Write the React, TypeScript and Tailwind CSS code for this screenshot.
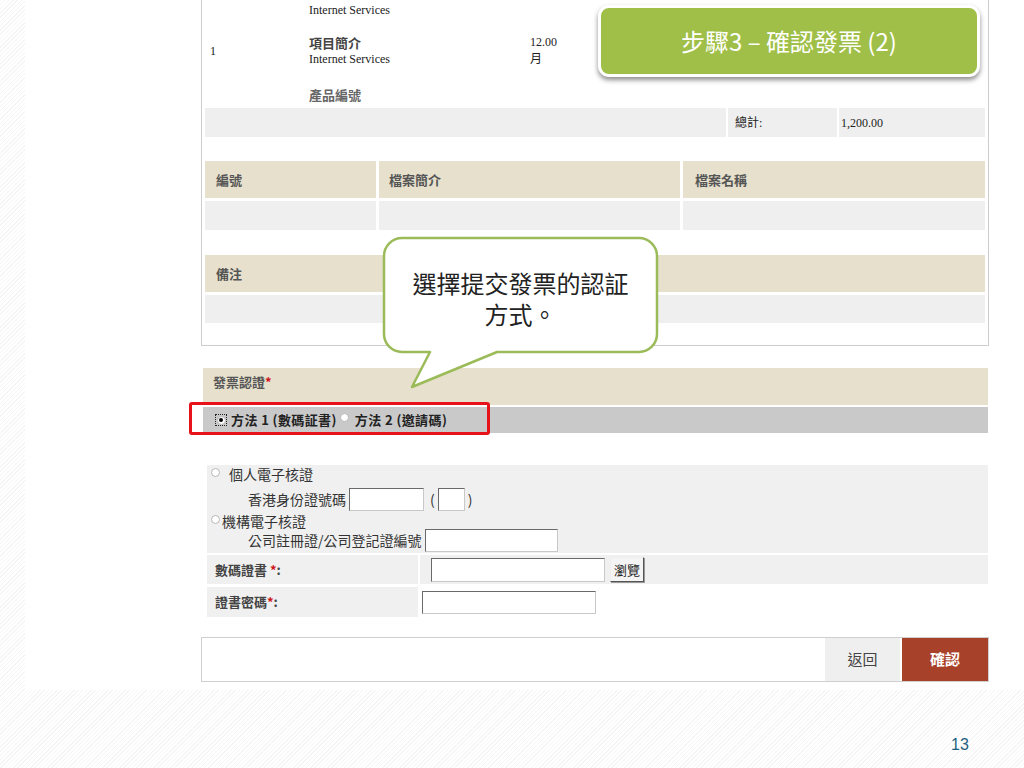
import { clsx } from 'clsx'

const cjk = "font-['Noto_Sans_CJK_TC',sans-serif]"
const serif = "font-['Liberation_Serif','Noto_Sans_CJK_TC',serif]"

function Radio({ checked, focus, className }: { checked?: boolean; focus?: boolean; className?: string }) {
  return (
    <span
      className={clsx(
        'inline-flex flex-shrink-0 items-center justify-center',
        focus ? 'h-[12px] w-[12px] border border-dotted border-[#222]' : 'h-[10px] w-[10px]',
        className
      )}
    >
      <span className="flex h-[9px] w-[9px] items-center justify-center rounded-full border border-[#b8b8b8] bg-white">
        {checked && <span className="h-[4px] w-[4px] rounded-full bg-black" />}
      </span>
    </span>
  )
}

function Field({ className }: { className?: string }) {
  return (
    <span
      className={clsx(
        'inline-block flex-shrink-0 border border-[#c8c8c8] border-t-[#6a6a6a] border-l-[#6a6a6a] bg-white',
        className
      )}
    />
  )
}

function Req() {
  return <span className="text-[#d0141c]">*</span>
}

export default function App() {
  return (
    <div
      className={clsx(
        'relative h-[768px] w-[1024px] overflow-hidden text-[#333]',
        'bg-[repeating-linear-gradient(135deg,#f5f5f5_0px,#f5f5f5_1px,#ffffff_1px,#ffffff_3px)]',
        cjk
      )}
    >
      <div className="ml-[25px] h-[690px] bg-white">
        {/* invoice panel */}
        <div className="ml-[176px] w-[788px] border-x border-b border-[#cdcdcd] px-[3px] pb-[22px]">
          <div className={clsx('flex h-[20px] items-center pl-[104px] text-[12px] text-[#222]', serif)}>
            Internet Services
          </div>
          <div className="flex h-[62px] items-center text-[#222]">
            <div className={clsx('w-[104px] pl-[5px] text-[12px]', serif)}>1</div>
            <div className="w-[221px] leading-[17px]">
              <div className="text-[13px] font-bold text-[#444]">項目簡介</div>
              <div className={clsx('text-[12px]', serif)}>Internet Services</div>
            </div>
            <div className={clsx('text-[12px] leading-[17px]', serif)}>
              <div>12.00</div>
              <div>月</div>
            </div>
          </div>
          <div className="flex h-[26px] items-center pl-[104px] text-[13px] font-bold text-[#666]">產品編號</div>

          <div className={clsx('flex h-[29px] text-[12px] text-[#222]', serif)}>
            <div className="w-[521px] bg-[#efefef]" />
            <div className="ml-[2px] flex w-[109px] items-center bg-[#efefef] pl-[7px]">總計:</div>
            <div className="ml-[2px] flex flex-1 items-center bg-[#efefef] pl-[2px]">1,200.00</div>
          </div>

          <div className="mt-[24px] flex h-[37px] text-[13px] font-bold text-[#555]">
            <div className="flex w-[171px] items-center bg-[#e6e0cc] pl-[11px]">編號</div>
            <div className="ml-[3px] flex w-[301px] items-center bg-[#e6e0cc] pl-[10px]">檔案簡介</div>
            <div className="ml-[3px] flex flex-1 items-center bg-[#e6e0cc] pl-[12px]">檔案名稱</div>
          </div>
          <div className="mt-[3px] flex h-[29px]">
            <div className="w-[171px] bg-[#efeff0]" />
            <div className="ml-[3px] w-[301px] bg-[#efeff0]" />
            <div className="ml-[3px] flex-1 bg-[#efeff0]" />
          </div>

          <div className="mt-[25px] flex h-[37px] items-center bg-[#e6e0cc] pl-[11px] text-[13px] font-bold text-[#555]">
            備注
          </div>
          <div className="mt-[3px] h-[28px] bg-[#efeff0]" />
        </div>

        {/* authentication */}
        <div className="ml-[178px] mt-[22px] w-[785px]">
          <div className="h-[37px] bg-[#e6e0cc] pl-[10px] pt-[6px] text-[13px] font-bold leading-[16px] text-[#555]">
            發票認證<Req />
          </div>
          <div className="mt-[2px] flex h-[26px] items-center bg-[#c9c9c9] pl-[12px] text-[13px] font-bold tracking-[0.4px] text-[#222]">
            <Radio checked focus />
            <span className="ml-[4px]">方法 1 (數碼証書)</span>
            <Radio className="mb-[6px] ml-[3px]" />
            <span className="ml-[5px]">方法 2 (邀請碼)</span>
          </div>
        </div>

        <div className="ml-[182px] mt-[32px] w-[781px]">
          <div className="h-[88px] bg-[#f0f0f0] text-[14px] text-[#333]">
            <div className="flex h-[19px] items-center pl-[3px]">
              <Radio className="mb-[4px]" />
              <span className="ml-[9px]">個人電子核證</span>
            </div>
            <div className="flex h-[30px] items-center pl-[41px]">
              <span>香港身份證號碼</span>
              <Field className="ml-[3px] h-[23px] w-[75px]" />
              <span className="ml-[6px]">(</span>
              <Field className="ml-[3px] h-[23px] w-[27px]" />
              <span className="ml-[3px]">)</span>
            </div>
            <div className="flex h-[14px] items-center pl-[3px]">
              <Radio className="mb-[4px]" />
              <span className="ml-[2px]">機構電子核證</span>
            </div>
            <div className="flex h-[25px] items-center pl-[41px]">
              <span>公司註冊證/公司登記證編號</span>
              <Field className="ml-[3px] h-[23px] w-[133px]" />
            </div>
          </div>

          <div className="mt-[2px] flex h-[29px] text-[13px]">
            <div className="flex w-[211px] items-center bg-[#f0f0f0] pl-[8px] font-bold text-[#444]">
              數碼證書&nbsp;<Req />:
            </div>
            <div className="ml-[2px] flex flex-1 items-center bg-[#f0f0f0]">
              <Field className="ml-[11px] h-[24px] w-[174px]" />
              <button className="ml-[5px] h-[25px] border border-[#eeeeee] border-r-[#555] border-b-[#555] bg-[#f4f4f4] px-[3px] text-[13px] leading-[20px] text-[#222] shadow-[1px_1px_0_#999]">
                瀏覽
              </button>
            </div>
          </div>
          <div className="mt-[3px] flex h-[30px] text-[13px]">
            <div className="flex w-[211px] items-center bg-[#f0f0f0] pl-[8px] font-bold text-[#444]">
              證書密碼<Req />:
            </div>
            <div className="flex flex-1 items-center">
              <Field className="ml-[4px] h-[23px] w-[174px]" />
            </div>
          </div>
        </div>

        <div className="ml-[176px] mt-[20px] flex h-[45px] w-[788px] justify-end border border-[#cfcfcf]">
          <button className="w-[75px] bg-[#efefef] text-[15px] text-[#444]">返回</button>
          <button className="ml-[2px] w-[86px] bg-[#a8412a] text-[15px] font-bold text-white">確認</button>
        </div>
      </div>

      {/* slide title */}
      <div className="absolute left-[598px] top-[5px] flex h-[72px] w-[382px] items-center justify-center rounded-[11px] border-[3px] border-white bg-[#9fbf48] text-[24px] text-white shadow-[0_3px_5px_rgba(0,0,0,0.45)]">
        步驟3 – 確認發票 (2)
      </div>

      {/* callout */}
      <svg className="absolute left-[382px] top-[236px]" width="278" height="154" viewBox="0 0 278 154">
        <path
          d="M20 2 H257 A18 18 0 0 1 275 20 V98 A18 18 0 0 1 257 116 H115 L30 151 L48 116 H20 A18 18 0 0 1 2 98 V20 A18 18 0 0 1 20 2 Z"
          fill="#ffffff"
          stroke="#9bbb59"
          strokeWidth="2.5"
          strokeLinejoin="round"
        />
      </svg>
      <div className="absolute left-[384px] top-[238px] flex h-[114px] w-[273px] items-center justify-center pt-[6px] text-center text-[24px] leading-[31px] text-[#222]">
        <p>
          選擇提交發票的認証
          <br />
          方式。
        </p>
      </div>

      {/* highlight */}
      <div className="absolute left-[189px] top-[402px] h-[33px] w-[301px] rounded-[3px] border-[3px] border-[#e8121b]" />

      <div className="absolute left-[951px] top-[733px] font-['Liberation_Sans',sans-serif] text-[16px] text-[#215f80]">
        13
      </div>
    </div>
  )
}
